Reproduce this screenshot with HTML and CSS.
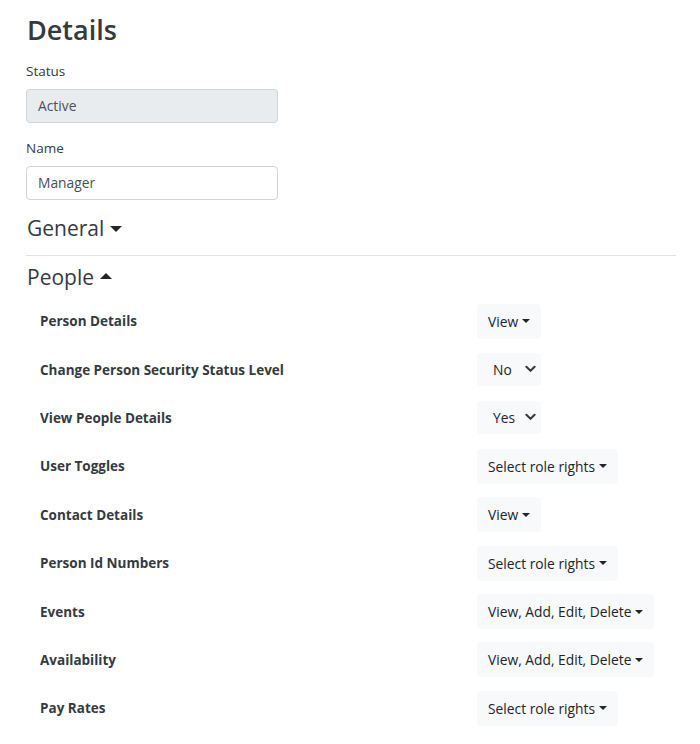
FILE: index.html
```html
<!DOCTYPE html>
<html lang="en">
<head>
<meta charset="utf-8">
<title>Details</title>
<link rel="stylesheet" href="styles.css">
</head>
<body>
<div class="page">
  <h1 class="title">Details</h1>
  <div class="field">
    <label class="field-label">Status</label>
    <div class="input input-disabled">Active</div>
  </div>
  <div class="field">
    <label class="field-label">Name</label>
    <div class="input">Manager</div>
  </div>
  <h2 class="section">General <span class="caret caret-down"></span></h2>
  <hr class="divider">
  <h2 class="section section-people">People <span class="caret caret-up"></span></h2>
  <div class="rights">
    <div class="row"><span class="row-label">Person Details</span><span class="btn">View<span class="caret caret-down"></span></span></div>
    <div class="row"><span class="row-label">Change Person Security Status Level</span><span class="select">No<svg class="chev" viewBox="0 0 12 8" width="11" height="8"><path d="M1.5 1.5 L6 6 L10.5 1.5" fill="none" stroke="#343a40" stroke-width="2.2" stroke-linecap="round" stroke-linejoin="round"/></svg></span></div>
    <div class="row"><span class="row-label">View People Details</span><span class="select">Yes<svg class="chev" viewBox="0 0 12 8" width="11" height="8"><path d="M1.5 1.5 L6 6 L10.5 1.5" fill="none" stroke="#343a40" stroke-width="2.2" stroke-linecap="round" stroke-linejoin="round"/></svg></span></div>
    <div class="row"><span class="row-label">User Toggles</span><span class="btn">Select role rights<span class="caret caret-down"></span></span></div>
    <div class="row"><span class="row-label">Contact Details</span><span class="btn">View<span class="caret caret-down"></span></span></div>
    <div class="row"><span class="row-label">Person Id Numbers</span><span class="btn">Select role rights<span class="caret caret-down"></span></span></div>
    <div class="row"><span class="row-label">Events</span><span class="btn">View, Add, Edit, Delete<span class="caret caret-down"></span></span></div>
    <div class="row"><span class="row-label">Availability</span><span class="btn">View, Add, Edit, Delete<span class="caret caret-down"></span></span></div>
    <div class="row"><span class="row-label">Pay Rates</span><span class="btn">Select role rights<span class="caret caret-down"></span></span></div>
  </div>
</div>
</body>
</html>
```
FILE: styles.css
```css
* { box-sizing: border-box; }
html, body { margin: 0; padding: 0; background: #fff; }
body {
  font-family: "Open Sans", "Noto Sans", sans-serif;
  font-size: 13.8px;
  color: #212529;
}
.page {
  width: 650px;
  margin-left: 26px;
  padding-top: 13px;
}
.title {
  margin: 0 0 14px 1px;
  font-size: 27px;
  font-weight: 600;
  line-height: 34px;
  color: #343a40;
}
.field { margin-bottom: 15px; }
.field-label {
  display: block;
  font-size: 13.5px;
  line-height: 21px;
  margin-bottom: 7px;
  color: #343a40;
}
.input {
  width: 252px;
  height: 34px;
  border: 1px solid #ced4da;
  border-radius: 4px;
  padding: 0 11px;
  line-height: 32px;
  font-size: 13.8px;
  color: #495057;
  background: #fff;
}
.input-disabled { background: #e9ecef; }
.section {
  margin: 3px 0 0 1px;
  font-size: 21px;
  font-weight: 500;
  line-height: 26px;
  color: #343a40;
  display: flex;
  align-items: center;
}
.section .caret {
  margin-left: 6px;
  border-left-width: 6px;
  border-right-width: 6px;
}
.section .caret-down { border-top-width: 6px; margin-top: 2px; }
.section .caret-up { border-bottom-width: 6px; margin-top: -2px; }
.divider {
  margin: 14px 0 8px 0;
  border: 0;
  border-top: 1px solid #e3e3e3;
  height: 0;
}
.caret {
  display: inline-block;
  width: 0;
  height: 0;
  border-left: 4px solid transparent;
  border-right: 4px solid transparent;
}
.caret-down { border-top: 4px solid #212529; }
.caret-up { border-bottom: 4px solid #212529; }
.rights {
  margin-top: 7px;
}
.row {
  display: grid;
  grid-template-columns: 437px auto;
  align-items: center;
  justify-items: start;
  height: 48.4px;
  padding-left: 14px;
}
.row-label {
  font-weight: 700;
  font-size: 13.5px;
  color: #343a40;
}
.btn {
  display: inline-flex;
  align-items: center;
  height: 35px;
  padding: 0 11px;
  background: #f8f9fa;
  border-radius: 4px;
  font-size: 13.8px;
  color: #212529;
}
.btn .caret { margin-left: 4px; }
.select {
  display: inline-flex;
  align-items: center;
  width: 64px;
  height: 33px;
  padding-left: 16px;
  background: #f8f9fa;
  border-radius: 4px;
  font-size: 13.8px;
  color: #212529;
  position: relative;
}
.select .chev {
  position: absolute;
  right: 5px;
  top: 12px;
}
```
